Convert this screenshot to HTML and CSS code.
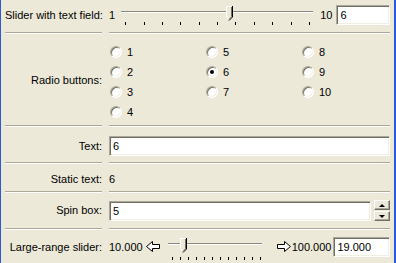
FILE: index.html
```html
<!DOCTYPE html>
<html lang="en">
<head>
    <meta charset="UTF-8">
    <title>Controls</title>
    <link rel="stylesheet" href="styles.css">
</head>
<body>
<div class="window">

    <div class="row r-slider">
        <div class="label">Slider with text field:</div>
        <div class="ctrl">
            <span class="num">1</span>
            <div class="slider small">
                <div class="track">
                    <svg class="thumb" style="left:56%" width="7" height="15" viewBox="0 0 7 15">
                        <polygon points="0.5,0.5 5.5,0.5 5.5,10.5 3,13.5 0.5,10.5" fill="#ece9d8" stroke="#fff"/>
                        <polyline points="6.5,0 6.5,11 3,14.5" fill="none" stroke="#000"/>
                        <polyline points="5.5,1 5.5,10.5 3,13.5" fill="none" stroke="#716f64"/>
                    </svg>
                </div>
                <div class="ticks"><i></i><i></i><i></i><i></i><i></i><i></i><i></i><i></i><i></i><i></i><i></i></div>
            </div>
            <span class="num max">10</span>
            <input class="field grow" value="6" readonly>
        </div>
    </div>
    <div class="sep-row"><div class="sep"></div><div class="sep"></div></div>

    <div class="row r-radio">
        <div class="label radio-label">Radio buttons:</div>
        <div class="radios">
            <div class="radio-col">
                <label class="radio"><span class="dot"></span>1</label>
                <label class="radio"><span class="dot"></span>2</label>
                <label class="radio"><span class="dot"></span>3</label>
                <label class="radio"><span class="dot"></span>4</label>
            </div>
            <div class="radio-col">
                <label class="radio"><span class="dot"></span>5</label>
                <label class="radio"><span class="dot on"></span>6</label>
                <label class="radio"><span class="dot"></span>7</label>
            </div>
            <div class="radio-col">
                <label class="radio"><span class="dot"></span>8</label>
                <label class="radio"><span class="dot"></span>9</label>
                <label class="radio"><span class="dot"></span>10</label>
            </div>
        </div>
    </div>
    <div class="sep-row"><div class="sep"></div><div class="sep"></div></div>

    <div class="row r-text">
        <div class="label">Text:</div>
        <div class="ctrl">
            <input class="field grow" value="6" readonly>
        </div>
    </div>
    <div class="sep-row"><div class="sep"></div><div class="sep"></div></div>

    <div class="row r-static">
        <div class="label">Static text:</div>
        <div class="ctrl"><span class="num">6</span></div>
    </div>
    <div class="sep-row"><div class="sep"></div><div class="sep"></div></div>

    <div class="row r-spin">
        <div class="label">Spin box:</div>
        <div class="ctrl spin-ctrl">
            <input class="field grow spin-field" value="5" readonly>
            <div class="spin">
                <div class="spin-btn"><span class="up"></span></div>
                <div class="spin-btn"><span class="down"></span></div>
            </div>
        </div>
    </div>
    <div class="sep-row"><div class="sep"></div><div class="sep"></div></div>

    <div class="row r-large">
        <div class="label">Large-range slider:</div>
        <div class="ctrl">
            <span class="num">10.000</span>
            <svg class="arrow left" width="16" height="13" viewBox="0 0 16 13">
                <polygon points="1.5,6.5 7.5,1.5 7.5,4.5 14.5,4.5 14.5,8.5 7.5,8.5 7.5,11.5" fill="#fff" stroke="#000"/>
            </svg>
            <div class="slider large">
                <div class="track">
                    <svg class="thumb" style="left:16%" width="7" height="15" viewBox="0 0 7 15">
                        <polygon points="0.5,0.5 5.5,0.5 5.5,10.5 3,13.5 0.5,10.5" fill="#ece9d8" stroke="#fff"/>
                        <polyline points="6.5,0 6.5,11 3,14.5" fill="none" stroke="#000"/>
                        <polyline points="5.5,1 5.5,10.5 3,13.5" fill="none" stroke="#716f64"/>
                    </svg>
                </div>
                <div class="ticks"><i></i><i></i><i></i><i></i><i></i><i></i><i></i><i></i><i></i><i></i><i></i><i></i></div>
            </div>
            <svg class="arrow right" width="16" height="13" viewBox="0 0 16 13">
                <polygon points="14.5,6.5 8.5,1.5 8.5,4.5 1.5,4.5 1.5,8.5 8.5,8.5 8.5,11.5" fill="#fff" stroke="#000"/>
            </svg>
            <span class="num">100.000</span>
            <input class="field grow big-field" value="19.000" readonly>
        </div>
    </div>

</div>
</body>
</html>
```

FILE: styles.css
```css
html, body {
    margin: 0;
    padding: 0;
}
body {
    background: #ece9d8;
    font-family: "Liberation Sans", Arial, sans-serif;
    font-size: 11px;
    color: #000;
}
.window {
    width: 396px;
    height: 263px;
    box-sizing: border-box;
    border-left: 1px solid #2a5bd8;
    border-right: 2px solid #2a5bd8;
    padding: 0 4px 0 4px;
    overflow: hidden;
}
.row, .sep-row {
    display: grid;
    grid-template-columns: 97px minmax(0, 1fr);
    column-gap: 7px;
    align-items: start;
}
.sep {
    height: 0;
    border-top: 1px solid #aca899;
    border-bottom: 1px solid #fff;
}
.label {
    text-align: right;
    line-height: 20px;
    white-space: nowrap;
}
.ctrl {
    display: flex;
    align-items: flex-start;
    min-width: 0;
}
.num {
    line-height: 20px;
    white-space: nowrap;
}
.grow { flex: 1 1 0; width: 0; min-width: 0; }

/* text fields */
.field {
    box-sizing: border-box;
    height: 20px;
    margin: 0;
    padding: 0 3px;
    border: 1px solid;
    border-color: #aca899 #fff #fff #aca899;
    box-shadow: inset 1px 1px #716f64, inset -1px -1px #f1efe2;
    background: #fff;
    font: inherit;
    color: #000;
    outline: none;
}

/* rows */
.r-slider { padding: 5px 0 5px; }
.r-radio { padding: 8px 0 3px; align-items: center; }
.r-text { padding: 9px 0 6px; }
.r-static { padding: 5px 0 2px; }
.r-spin { padding: 7px 0 7px; }
.r-large { padding: 7px 0 0; }

/* sliders */
.slider {
    box-sizing: border-box;
    flex: none;
}
.slider.small {
    width: 200px;
    height: 22px;
    padding: 0 4px;
    margin-left: 2px;
}
.slider.large {
    width: 100px;
    height: 26px;
    padding: 0 3px;
    margin-left: 4px;
}
.track {
    position: relative;
    height: 0;
    margin-top: 6px;
    border-top: 1px solid #8c8a7c;
    border-bottom: 1px solid #fff;
}
.thumb {
    position: absolute;
    top: -6px;
    margin-left: -3px;
}
.ticks {
    display: flex;
    justify-content: space-between;
}
.ticks i {
    width: 1px;
    height: 3px;
    background: #000;
}
.small .ticks { margin-top: 9px; padding: 0 3px 0 4px; }
.large .ticks { margin-top: 12px; padding: 0 1px 0 4px; }

.max { margin-left: 3px; }
.r-slider .field { margin-left: 4px; }

/* radios */
.radio-label { margin-bottom: 4px; }
.radios {
    display: grid;
    grid-template-columns: repeat(3, 96px);
}
.radio {
    display: flex;
    align-items: center;
    height: 20px;
    padding-left: 1px;
    gap: 5px;
}
.dot {
    position: relative;
    width: 12px;
    height: 12px;
    box-sizing: border-box;
    border-radius: 50%;
    border: 1px solid;
    border-color: #aca899 #fff #fff #aca899;
    box-shadow: inset 1px 1px #716f64, inset -1px -1px #f1efe2;
    background: #fff;
}
.dot.on::after {
    content: "";
    position: absolute;
    left: 3px;
    top: 3px;
    width: 4px;
    height: 4px;
    border-radius: 50%;
    background: #000;
}

/* spin box */
.spin-ctrl { align-items: center; }
.spin-field { margin-top: 1px; }
.spin {
    display: flex;
    flex-direction: column;
    gap: 1px;
    margin-left: 3px;
}
.spin-btn {
    box-sizing: border-box;
    width: 16px;
    height: 10px;
    border: 1px solid;
    border-color: #fff #716f64 #716f64 #fff;
    box-shadow: inset -1px -1px #aca899;
    background: #ece9d8;
    display: flex;
    align-items: center;
    justify-content: center;
}
.up, .down {
    width: 0;
    height: 0;
    border-left: 3px solid transparent;
    border-right: 3px solid transparent;
}
.up { border-bottom: 3px solid #000; }
.down { border-top: 3px solid #000; }

/* large-range row */
.arrow { margin-top: 3px; flex: none; }
.arrow.left { margin-left: 2px; }
.arrow.right { margin-left: 11px; }
.big-field { margin-left: 2px; }
```
